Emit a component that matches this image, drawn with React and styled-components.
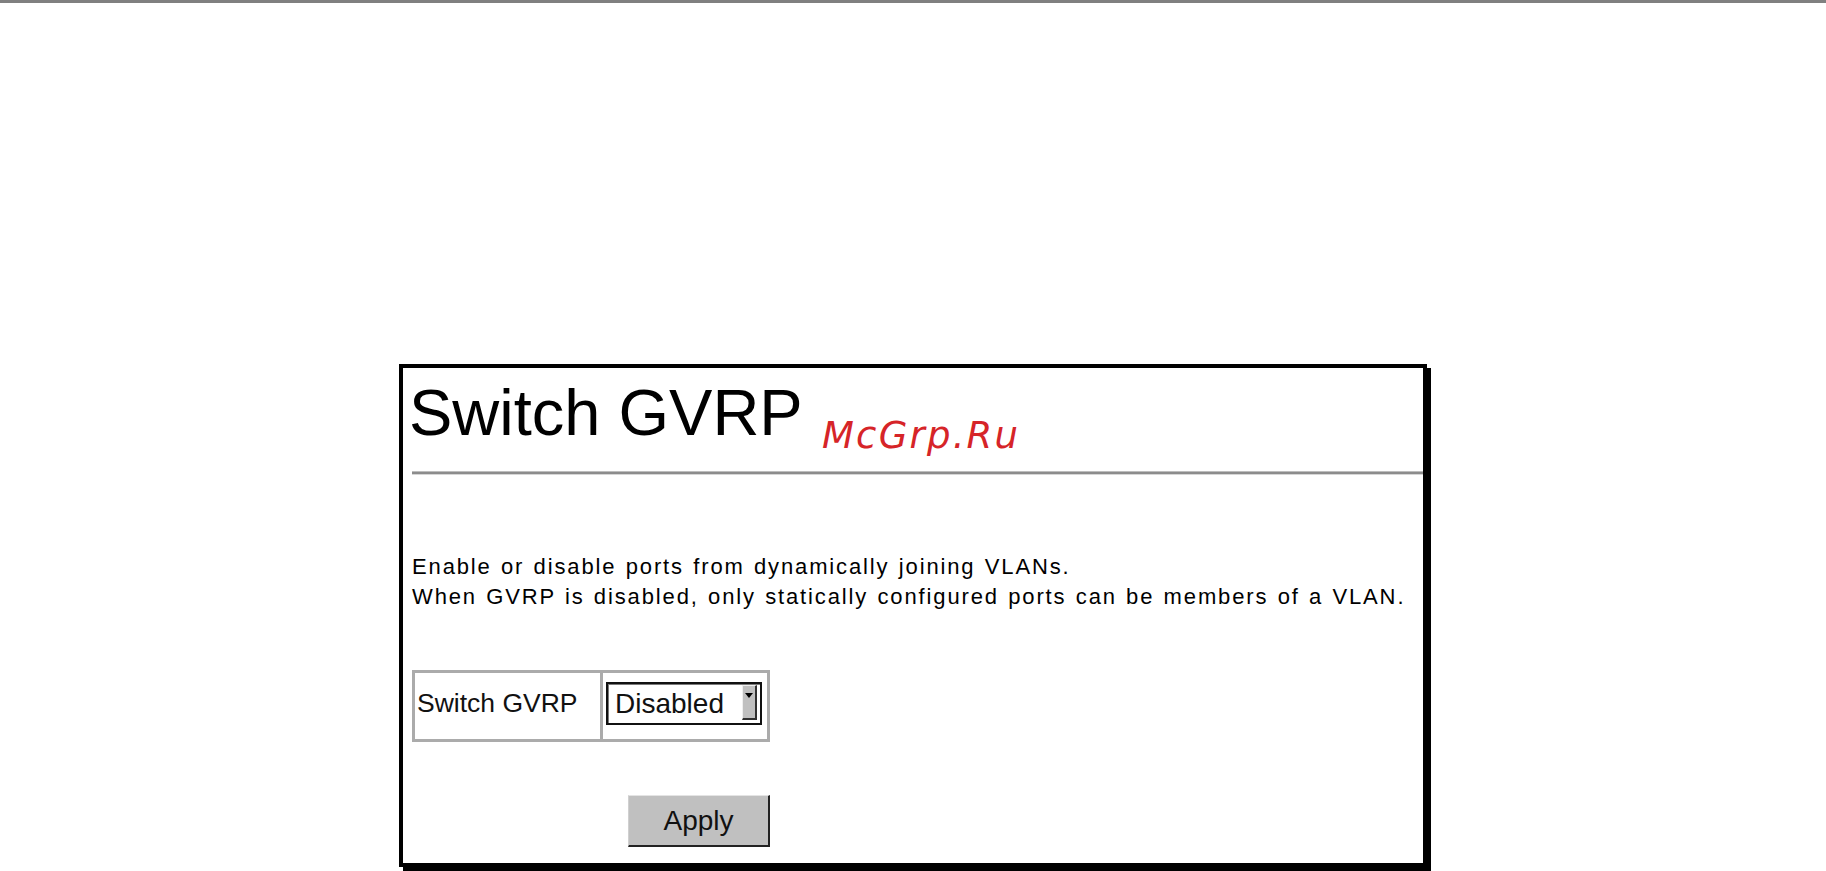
import React from "react";
import styled, { createGlobalStyle } from "styled-components";

const GlobalStyle = createGlobalStyle`
  html, body {
    margin: 0;
    padding: 0;
    background: #ffffff;
  }
  body {
    font-family: "Liberation Sans", Arial, sans-serif;
    color: #000;
  }
`;

const Page = styled.div`
  width: 1826px;
  min-height: 871px;
  overflow: hidden;
`;

const TopRule = styled.div`
  height: 3px;
  background: #808080;
`;

const Stage = styled.div`
  padding: 361px 0 0 399px;
`;

const Panel = styled.section`
  position: relative;
  box-sizing: border-box;
  width: 1028px;
  border: 4px solid #000;
  box-shadow: 4px 4px 0 #000;
  background: #fff;
  padding: 0 0 16px 9px;
`;

const Title = styled.h1`
  margin: 12px 0 0 -3px;
  font-family: "Liberation Sans", Arial, sans-serif;
  font-weight: normal;
  font-size: 65px;
  line-height: 65px;
  color: #000;
`;

const Watermark = styled.span`
  position: absolute;
  left: 419px;
  top: 49px;
  font-family: "DejaVu Sans", Verdana, sans-serif;
  font-style: oblique;
  font-size: 37px;
  line-height: 37px;
  letter-spacing: 2.2px;
  color: #d62428;
`;

const Rule = styled.div`
  margin-top: 26px;
  height: 2px;
  background: #8c8c8c;
  border-top: 1px solid #bdbdbd;
  border-bottom: 1px solid #d6d6d6;
`;

const Description = styled.p`
  margin: 77px 0 0 0;
  font-family: "Liberation Sans", Arial, sans-serif;
  font-size: 22px;
  line-height: 30px;
  letter-spacing: 1.87px;
  word-spacing: 1.3px;
  color: #000;
`;

const SettingsTable = styled.div`
  display: flex;
  box-sizing: border-box;
  margin-top: 58px;
  width: 358px;
  height: 72px;
  border: 3px solid #ababab;
`;

const LabelCell = styled.div`
  display: flex;
  align-items: center;
  box-sizing: border-box;
  width: 185px;
  padding: 0 0 5px 2px;
  font-size: 26.5px;
  color: #111;
`;

const ValueCell = styled.div`
  display: flex;
  align-items: flex-start;
  flex: 1;
  border-left: 3px solid #ababab;
  padding: 9px 5px 0 3px;
`;

const Dropdown = styled.div`
  display: flex;
  align-items: flex-start;
  box-sizing: border-box;
  width: 156px;
  height: 43px;
  border: 2px solid #111;
  box-shadow: inset 1px 1px 0 #7a7a7a;
  background: #fff;
  padding: 1px 3px 0 7px;
`;

const DropdownValue = styled.span`
  flex: 1;
  font-size: 28px;
  line-height: 31px;
  margin-top: 3px;
  color: #111;
  white-space: nowrap;
`;

const DropdownArrow = styled.span`
  position: relative;
  flex: none;
  box-sizing: border-box;
  width: 15px;
  height: 35px;
  background: #c0c0c0;
  border-top: 1px solid #efefef;
  border-left: 1px solid #efefef;
  border-right: 2px solid #303030;
  border-bottom: 2px solid #303030;

  &::after {
    content: "";
    position: absolute;
    left: 2px;
    top: 7px;
    border-left: 4px solid transparent;
    border-right: 4px solid transparent;
    border-top: 5px solid #000;
  }
`;

const ApplyButton = styled.button`
  display: block;
  box-sizing: border-box;
  margin: 53px 0 0 216px;
  width: 142px;
  height: 52px;
  padding: 0;
  background: #c0c0c0;
  border-top: 1px solid #e4e4e4;
  border-left: 1px solid #d0d0d0;
  border-right: 2px solid #222;
  border-bottom: 2px solid #222;
  font-family: "Liberation Sans", Arial, sans-serif;
  font-size: 28px;
  color: #111;
  cursor: pointer;
`;

export default function App() {
  return (
    <Page>
      <GlobalStyle />
      <TopRule />
      <Stage>
        <Panel>
          <Title>Switch GVRP</Title>
          <Watermark>McGrp.Ru</Watermark>
          <Rule />
          <Description>
            Enable or disable ports from dynamically joining VLANs.
            <br />
            When GVRP is disabled, only statically configured ports can be members of a VLAN.
          </Description>
          <SettingsTable>
            <LabelCell>Switch GVRP</LabelCell>
            <ValueCell>
              <Dropdown>
                <DropdownValue>Disabled</DropdownValue>
                <DropdownArrow />
              </Dropdown>
            </ValueCell>
          </SettingsTable>
          <ApplyButton>Apply</ApplyButton>
        </Panel>
      </Stage>
    </Page>
  );
}
